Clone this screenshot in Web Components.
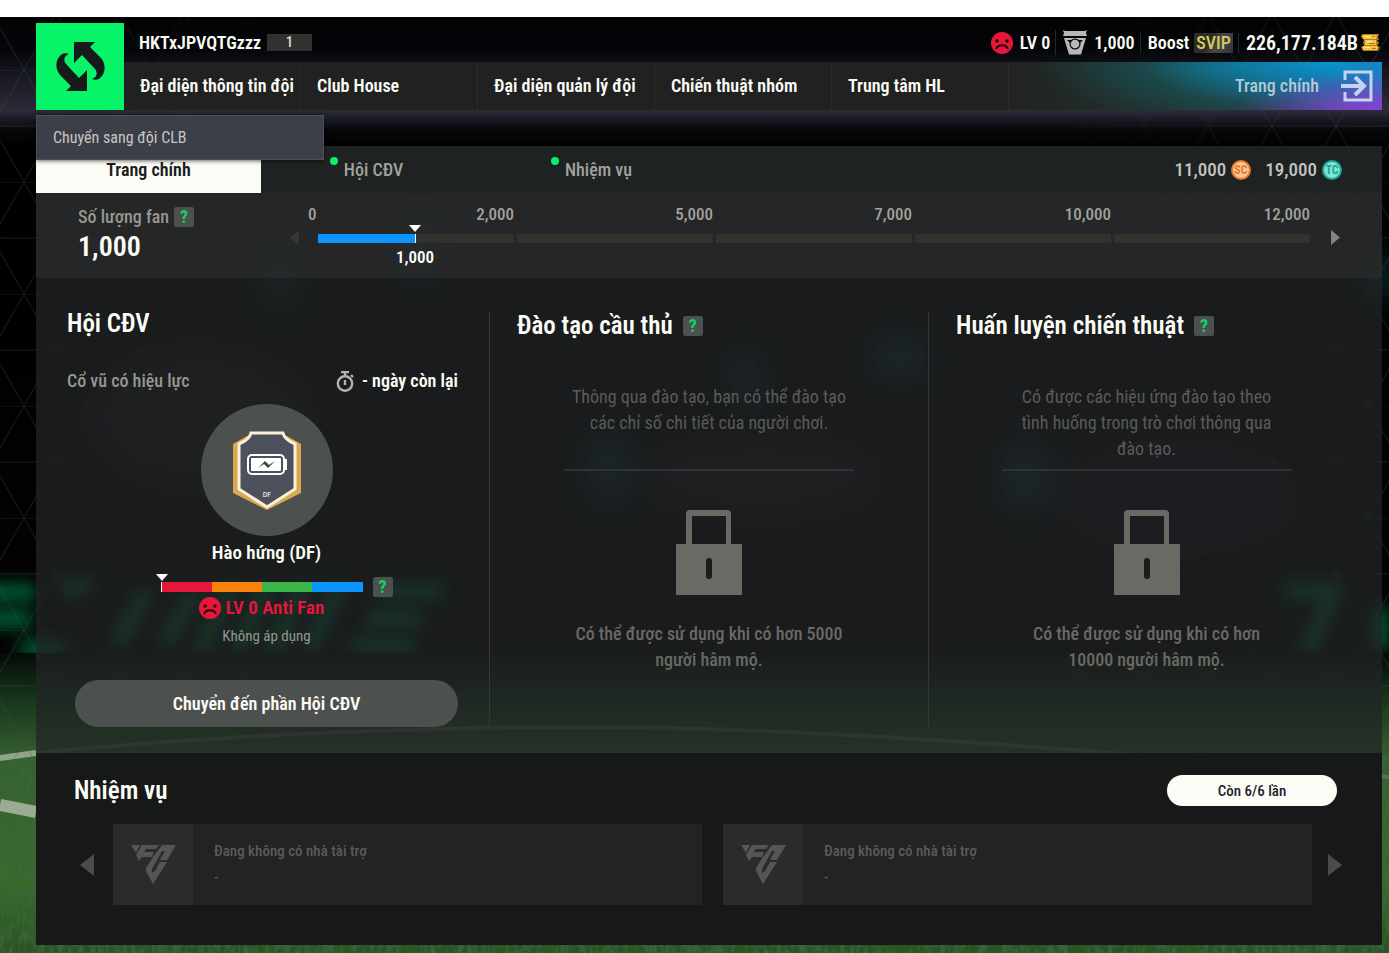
<!DOCTYPE html>
<html lang="vi">
<head>
<meta charset="utf-8">
<title>Club House</title>
<style>
    body {
        margin: 0;
        padding-top: 17px;
        background: #fff;
        color: #fbfcf5;
        font-family: "Roboto Condensed", "Noto Sans", sans-serif;
        font-size: 18px;
        font-weight: 600;
        line-height: 26px;
    }
</style>
</head>
<body>
<club-page>
    <club-header slot="header" user="HKTxJPVQTGzzz" level="1">
        <a slot="nav" href="#team">Đại diện thông tin đội</a>
        <a slot="nav" href="#club">Club House</a>
        <a slot="nav" href="#manager">Đại diện quản lý đội</a>
        <a slot="nav" href="#tactics">Chiến thuật nhóm</a>
        <a slot="nav" href="#hl">Trung tâm HL</a>
        <span slot="exit">Trang chính</span>
        <span slot="menu">Chuyển sang đội CLB</span>
    </club-header>

    <club-tabs slot="tabs">
        <club-tab active>Trang chính</club-tab>
        <club-tab dot>Hội CĐV</club-tab>
        <club-tab dot>Nhiệm vụ</club-tab>
        <club-coin slot="coins" kind="SC">11,000</club-coin>
        <club-coin slot="coins" kind="TC">19,000</club-coin>
    </club-tabs>

    <fan-progress slot="fans" value="1000" stops="0,2000,5000,7000,10000,12000">Số lượng fan</fan-progress>

    <fan-club slot="columns">Hội CĐV</fan-club>
    <locked-panel slot="columns">
        Đào tạo cầu thủ
        <span slot="info">Thông qua đào tạo, bạn có thể đào tạo các chỉ số chi tiết của người chơi.</span>
        <span slot="need">Có thể được sử dụng khi có hơn 5000 người hâm mộ.</span>
    </locked-panel>
    <locked-panel slot="columns" narrow>
        Huấn luyện chiến thuật
        <span slot="info">Có được các hiệu ứng đào tạo theo tình huống trong trò chơi thông qua đào tạo.</span>
        <span slot="need">Có thể được sử dụng khi có hơn 10000 người hâm mộ.</span>
    </locked-panel>

    <mission-list slot="missions">
        <span slot="title">Nhiệm vụ</span>
        <span slot="left">Còn 6/6 lần</span>
        <mission-card>Đang không có nhà tài trợ</mission-card>
        <mission-card>Đang không có nhà tài trợ</mission-card>
    </mission-list>
</club-page>

<script>
const resetStyle = `
    <style>
        * { box-sizing: border-box; }
        h1, h2, p { margin: 0; font: inherit; }
        button {
            padding: 0;
            border: 0;
            background: none;
            color: inherit;
            font: inherit;
            cursor: pointer;
        }
        a { color: inherit; text-decoration: none; }
        svg { display: block; }
        :host([hidden]) { display: none; }
    </style>
`

// every component renders once, into an open shadow root
class ClubElement extends HTMLElement {
    constructor() {
        super()
        this.attachShadow({ mode: 'open' })
    }
    connectedCallback() {
        this.shadowRoot.innerHTML = resetStyle + this.render()
    }
    render() {
        return '<slot></slot>'
    }
}

const SWAP_ARROW = 'M18 0h21l-5 5 11 11c5 6 5 15-1 20-2 2-5 2-8 1 5-2 6-6 3-10L26 13l-8 8z'

const ICONS = {
    swap: [49, 49, `
        <path fill="#161a18" d="${SWAP_ARROW}"/>
        <path fill="#161a18" d="${SWAP_ARROW}" transform="rotate(180 24.500 24.500)"/>`],
    sad: [22, 22, `
        <circle cx="11" cy="11" r="11" fill="#e6173a"/>
        <circle cx="6" cy="9" r="1.700" fill="#1c0509"/>
        <circle cx="16" cy="9" r="1.700" fill="#1c0509"/>
        <path d="M5 17c2-5 10-5 12 0" fill="none" stroke="#1c0509" stroke-width="1.800"/>`],
    medal: [24, 25, `
        <path fill="#b9b7b8" d="M0 0l2 1h20l2-1-1 3 1 3H0l1-3z"/>
        <path fill="#b9b7b8" d="M1 8h22l-5 16.500H6z"/>
        <path fill="#0b0c0f" d="M4 10h16l-3 3H7z"/>
        <circle cx="12" cy="14" r="5.500" fill="#0b0c0f"/>
        <circle cx="12" cy="14" r="4.300" fill="#b9b7b8"/>`],
    coins: [19, 17, `
        <path fill="#b27a1a" d="M1 0h17l-1 3 1 3h-2l2 3-2 3 3 1-2 4H2l-2-4 3-1-1-4 1-2-3-3z"/>
        <path fill="#f0c548" d="M2 1h14l-1 4H3L1 3zM4 6h11v5H4zM2 12h15l-1 4H3l-2-2z"/>
        <path fill="#fff1a0" d="M4 2h5v1H4zM6 7h5v1H6zM4 13h5v1H4z"/>
        <path fill="#b27a1a" d="M11 2h3v1h-3zM8 9h6v1H8zM11 14h4v1h-4z"/>`],
    exit: [32, 32, `
        <path d="M4 10V2h26v28H4v-8" fill="none" stroke="#c6d2ef" stroke-width="3"/>
        <path d="M0 16h23M14 7l9 9-9 9" fill="none" stroke="#c6d2ef" stroke-width="4"/>`],
    timer: [18, 21, `
        <circle cx="9" cy="12.500" r="7.200" fill="none" stroke="#b4b3b0" stroke-width="2.400"/>
        <path d="M5 1h8M9 1v4M15 4l2 2M9 9v5" fill="none" stroke="#b4b3b0" stroke-width="2.400"/>`],
    lock: [66, 85, `
        <path fill="#696a63" fill-rule="evenodd" d="M10 34V4q0-4 4-4h37q4 0 4 4v30h11v51H0V34zM16 34h34V6H16z"/>
        <rect x="30" y="48" width="6" height="21" rx="3" fill="#1a1b1c"/>`],
    badge: [68, 79, `
        <path fill="#d9a94f" d="M0 13L14 5h40l14 8v49L34 79 0 62z"/>
        <path fill="#4d515b" stroke="#fbf0dc" stroke-width="3" d="M18 2h32c1 5 5 8 12 11v45L34 76 6 58V13c7-3 11-6 12-11z"/>
        <rect x="15" y="24" width="36" height="19" rx="4" fill="none" stroke="#fff" stroke-width="2"/>
        <rect x="18" y="27" width="30" height="13" rx="1" fill="#fff"/>
        <path fill="#fff" d="M52 28h2v11h-2z"/>
        <path fill="#3c4048" d="M25 37l7-7 4 4 6-4-7 7-4-4z"/>
        <text x="34" y="66" fill="#fff" font-size="8" font-weight="400" text-anchor="middle">DF</text>`],
    fc: [45, 40, `
        <path fill="#535556" d="M0 0h9L5 8z"/>
        <path fill="#535556" d="M11 0h17l-3 4H15l-2 3h10l-2 5H11l-3 4-3-6z"/>
        <path fill="#535556" d="M31 0h14l-9 15h-7l5-9h-3L21 24v4l3-2 5-9h7L22 39l-7-13v-3l7-11z"/>`],
    left: [14, 22, '<path fill="currentColor" d="M14 0v22L0 11z"/>'],
    right: [14, 22, '<path fill="currentColor" d="M0 0v22l14-11z"/>'],
    marker: [12, 7, '<path fill="#fff" d="M0 0h12L6 7z"/>']
}

class ClubIcon extends ClubElement {
    render() {
        const [w, h, body] = ICONS[this.getAttribute('name')]
        return `
            <style>
                :host { display: inline-block; flex: none; }
            </style>
            <svg width="${w}" height="${h}" viewBox="0 0 ${w} ${h}" aria-hidden="true">${body}</svg>
        `
    }
}

// stadium behind the panels
class StadiumScene extends ClubElement {
    render() {
        return `
            <style>
                :host { display: block; overflow: hidden; background: #030405; }
                svg { width: 100%; height: 100%; }
            </style>
            <svg viewBox="0 0 1389 936" preserveAspectRatio="xMidYMid slice" aria-hidden="true">
                <defs>
                    <linearGradient id="sky" x2="0" y2="1">
                        <stop offset="0" stop-color="#020304"/>
                        <stop offset=".035" stop-color="#050609"/>
                        <stop offset=".06" stop-color="#15161f"/>
                        <stop offset=".1" stop-color="#2b2c38"/>
                        <stop offset=".12" stop-color="#08080b"/>
                        <stop offset=".14" stop-color="#000"/>
                        <stop offset="1" stop-color="#050405"/>
                    </linearGradient>
                    <linearGradient id="grass" x2="0" y2="1">
                        <stop offset="0" stop-color="#050a08"/>
                        <stop offset=".15" stop-color="#17351a"/>
                        <stop offset=".35" stop-color="#35602f"/>
                        <stop offset=".75" stop-color="#3a6c2b"/>
                        <stop offset="1" stop-color="#2a5222"/>
                    </linearGradient>
                    <linearGradient id="edge">
                        <stop offset="0" stop-color="#fff"/>
                        <stop offset=".2" stop-color="#000"/>
                        <stop offset=".75" stop-color="#000"/>
                        <stop offset="1" stop-color="#fff"/>
                    </linearGradient>
                    <pattern id="mesh" width="64" height="112" patternUnits="userSpaceOnUse" patternTransform="translate(24 -59)">
                        <path d="M0 0h64M0 56h64M0 0l64 112M64 0L0 112" fill="none" stroke="#46504c" stroke-opacity=".4"/>
                    </pattern>
                    <mask id="fade"><rect width="1389" height="936" fill="url(#edge)"/></mask>
                    <filter id="soft" x="-20%" y="-20%" width="140%" height="140%"><feGaussianBlur stdDeviation="16"/></filter>
                    <filter id="glow" x="-20%" y="-50%" width="140%" height="200%"><feGaussianBlur stdDeviation="8"/></filter>
                    <filter id="blades" x="0" y="0" width="100%" height="100%">
                        <feTurbulence type="fractalNoise" baseFrequency=".22 .08" numOctaves="3" seed="4"/>
                        <feColorMatrix values="0 0 0 0 .04  0 0 0 0 .13  0 0 0 0 .04  3 0 0 0 -1.200"/>
                    </filter>
                </defs>
                <rect width="1389" height="936" fill="url(#sky)"/>
                <g filter="url(#soft)" opacity=".75">
                    <ellipse cx="420" cy="230" rx="18" ry="40" fill="#0d4048"/>
                    <ellipse cx="280" cy="260" rx="20" ry="34" fill="#0d3030"/>
                    <ellipse cx="608" cy="450" rx="20" ry="36" fill="#0d4044"/>
                    <ellipse cx="745" cy="360" rx="16" ry="30" fill="#0d4044"/>
                    <ellipse cx="900" cy="340" rx="30" ry="22" fill="#0d4044"/>
                    <ellipse cx="1025" cy="460" rx="24" ry="34" fill="#0d4044"/>
                    <ellipse cx="1382" cy="260" rx="18" ry="24" fill="#0d3c40"/>
                    <ellipse cx="200" cy="400" rx="110" ry="70" fill="#14141f"/>
                    <ellipse cx="760" cy="460" rx="120" ry="40" fill="#14121e"/>
                    <ellipse cx="1180" cy="480" rx="120" ry="60" fill="#12111c"/>
                </g>
                <!-- advertising boards glowing along the touchline -->
                <g filter="url(#glow)" fill="none" stroke="#04683a" stroke-width="15">
                    <path d="M-30 575h66M-30 602h62M20 632h46M60 570h32"/>
                    <path d="M148 574l-32 54M196 574l-32 54M232 568l-32 68M268 568l-32 68M304 568l-32 68M340 568l-32 68"/>
                    <path d="M378 574h64M366 602h56M350 630h66"/>
                    <path d="M1286 574h56M1334 574l-28 62M1380 590v44"/>
                </g>
                <rect y="636" width="1389" height="300" fill="url(#grass)"/>
                <rect y="740" width="1389" height="196" filter="url(#blades)"/>
                <path d="M0 741l36-5" fill="none" stroke="#b9c1b2" stroke-width="6" stroke-opacity=".7"/>
                <path d="M36 736Q280 712 560 710T1389 760" fill="none" stroke="#8d8f90" stroke-width="4" stroke-opacity=".4"/>
                <path d="M0 788l36 7" fill="none" stroke="#c3cbbd" stroke-width="12" stroke-opacity=".7"/>
                <rect width="1389" height="936" fill="url(#mesh)" mask="url(#fade)"/>
            </svg>
        `
    }
}

class HelpTip extends ClubElement {
    render() {
        return `
            <style>
                :host { display: inline-flex; flex: none; }
                button {
                    width: 20px;
                    height: 20px;
                    border-radius: 2px;
                    background: #4c504f;
                    color: #10d561;
                    font-size: 18px;
                    font-weight: 700;
                    line-height: 20px;
                }
            </style>
            <button type="button" aria-label="Trợ giúp">?</button>
        `
    }
}

class ClubPage extends ClubElement {
    render() {
        return `
            <style>
                :host { display: grid; }
                stadium-scene, main { grid-area: 1 / 1; min-width: 0; }
                stadium-scene { contain: size; }
                main { position: relative; padding: 6px 7px 8px 36px; }
                .panel { margin-top: 36px; background: rgba(34, 36, 38, .75); }
                .top { background: rgba(45, 47, 46, .6); }
                .columns {
                    display: grid;
                    grid-template-columns: 454fr 439fr 453fr;
                    padding: 34px 0 26px;
                }
            </style>
            <stadium-scene></stadium-scene>
            <main>
                <slot name="header"></slot>
                <div class="panel">
                    <div class="top">
                        <slot name="tabs"></slot>
                        <slot name="fans"></slot>
                    </div>
                    <div class="columns"><slot name="columns"></slot></div>
                    <slot name="missions"></slot>
                </div>
            </main>
        `
    }
}

class ClubHeader extends ClubElement {
    render() {
        return `
            <style>
                :host {
                    position: relative;
                    z-index: 1;
                    display: grid;
                    grid-template: 39px 48px / 88px 1fr;
                }
                .logo {
                    grid-row: 1 / 3;
                    display: grid;
                    place-items: center;
                    background: #07f468;
                }
                .status { display: flex; align-items: center; padding: 0 2px 0 15px; }
                .level {
                    width: 45px;
                    height: 17px;
                    margin: 0 auto 0 6px;
                    background: #32312f;
                    color: #d6d6d0;
                    font-size: 15px;
                    font-weight: 500;
                    line-height: 17px;
                    text-align: center;
                }
                .stat { display: flex; align-items: center; gap: 7px; }
                .stat + .stat { margin-left: 5px; padding-left: 7px; border-left: 1px solid #26272a; line-height: 20px; }
                .boost { gap: 5px; }
                .money { font-size: 20px; gap: 3px; }
                .svip {
                    padding: 0 2px;
                    background: linear-gradient(120deg, #2d2c27 40%, #48474a 60%, #2f3440);
                    color: #d3cc5f;
                    font-weight: 500;
                }
                nav { display: flex; background: #212121; }
                ::slotted(a) {
                    box-sizing: border-box;
                    width: 177px;
                    flex: none;
                    padding-left: 16px;
                    border-right: 1px solid #2b2b2b;
                    color: inherit;
                    line-height: 48px;
                    text-decoration: none;
                    white-space: nowrap;
                }
                .exit {
                    flex: 1;
                    display: flex;
                    align-items: center;
                    justify-content: flex-end;
                    gap: 22px;
                    padding-right: 9px;
                    background:
                        radial-gradient(ellipse 40% 90% at 100% 110%, #8a3fd0, transparent),
                        radial-gradient(ellipse 50% 100% at 86% 0, #0a93d2, transparent),
                        radial-gradient(ellipse 55% 130% at 62% 0, #155f68, transparent),
                        linear-gradient(90deg, #212321, #22302c 40%, #25404a 75%, #4a62c4);
                    color: #b5c9d8;
                    font-weight: 500;
                }
                .menu {
                    position: absolute;
                    top: 92px;
                    left: 0;
                    width: 288px;
                    height: 45px;
                    padding-left: 16px;
                    border: 1px solid #46525c;
                    background: #3c3e48;
                    color: #c6c6c6;
                    font-size: 16px;
                    font-weight: 400;
                    text-align: left;
                    box-shadow: 0 1px 4px rgba(0, 0, 0, .6);
                }
            </style>
            <button class="logo" type="button" aria-label="Chuyển đội"><club-icon name="swap"></club-icon></button>
            <div class="status">
                <span>${this.getAttribute('user')}</span>
                <span class="level">${this.getAttribute('level')}</span>
                <span class="stat"><club-icon name="sad"></club-icon>LV 0</span>
                <span class="stat"><club-icon name="medal"></club-icon>1,000</span>
                <span class="stat boost">Boost <span class="svip">SVIP</span></span>
                <span class="stat money">226,177.184B<club-icon name="coins"></club-icon></span>
            </div>
            <nav>
                <slot name="nav"></slot>
                <a class="exit" href="#main"><slot name="exit"></slot><club-icon name="exit"></club-icon></a>
            </nav>
            <button class="menu" type="button"><slot name="menu"></slot></button>
        `
    }
}

class ClubTabs extends ClubElement {
    render() {
        return `
            <style>
                :host { display: flex; height: 47px; background: rgba(27, 31, 31, .6); }
                .coins { display: flex; align-items: center; gap: 14px; margin-left: auto; padding-right: 40px; }
            </style>
            <slot></slot>
            <div class="coins"><slot name="coins"></slot></div>
        `
    }
}

class ClubTab extends ClubElement {
    render() {
        return `
            <style>
                :host { display: block; width: 225px; color: #a1a29c; font-weight: 500; }
                :host([active]) { background: #fbfcf6; color: #1a1c1c; font-weight: 600; }
                button { width: 100%; height: 100%; }
                .label { position: relative; }
                :host([dot]) .label::before {
                    content: "";
                    position: absolute;
                    top: -2px;
                    left: -14px;
                    width: 8px;
                    height: 8px;
                    border-radius: 50%;
                    background: #07f468;
                }
            </style>
            <button type="button"><span class="label"><slot></slot></span></button>
        `
    }
}

class ClubCoin extends ClubElement {
    render() {
        const kind = this.getAttribute('kind')
        const [rim, face] = kind === 'SC' ? ['#e8782a', '#f9c795'] : ['#1aa697', '#7fe3d5']
        return `
            <style>
                :host { display: flex; align-items: center; gap: 5px; color: #c3c4c0; font-size: 19px; font-weight: 500; }
            </style>
            <slot></slot>
            <svg width="20" height="20" viewBox="0 0 20 20">
                <circle cx="10" cy="10" r="9" fill="${face}" stroke="${rim}" stroke-width="2"/>
                <text x="10" y="14" fill="${rim}" font-size="12" font-weight="700" text-anchor="middle">${kind}</text>
            </svg>
        `
    }
}

class FanProgress extends ClubElement {
    render() {
        const value = Number(this.getAttribute('value'))
        const [first, ...stops] = this.getAttribute('stops').split(',').map(Number)
        const fill = value / stops[0] * 100
        const segments = stops.map((stop, i) => `
            <div class="segment">
                <span class="stop">${stop.toLocaleString('en-US')}</span>
                <div class="bar">${i === 0 ? `
                    <div class="fill" style="width: ${fill}%">
                        <club-icon name="marker"></club-icon>
                        <span class="value">${value.toLocaleString('en-US')}</span>
                    </div>` : ''}
                </div>
            </div>`).join('')
        return `
            <style>
                :host { display: flex; height: 85px; }
                .count { width: 254px; padding: 11px 0 0 42px; color: #96978f; font-weight: 500; }
                .count p { display: flex; align-items: center; gap: 5px; }
                .count strong { display: block; color: #fbfcf5; font-size: 28px; font-weight: 600; line-height: 34px; }
                .arrow { width: 9px; height: 15px; margin-top: 37px; color: #353736; }
                .next { color: #83857f; }
                .meter { position: relative; flex: 1; display: flex; gap: 3px; margin: 0 21px 0 19px; }
                .first { position: absolute; top: 10px; left: -10px; }
                .segment { flex: 1; padding-top: 10px; text-align: right; }
                .first, .stop { display: block; color: #a1a29c; font-size: 17px; font-weight: 500; line-height: 22px; }
                .bar { height: 9px; margin-top: 9px; background: #32312e; }
                .fill { position: relative; height: 9px; border-right: 1px solid #fff; background: #0d95ff; }
                club-icon { position: absolute; top: -9px; right: -6px; }
                .value {
                    position: absolute;
                    top: 12px;
                    right: 0;
                    transform: translateX(50%);
                    font-size: 17px;
                    line-height: 22px;
                }
                .next { margin-right: 42px; }
            </style>
            <div class="count">
                <p><slot></slot><help-tip></help-tip></p>
                <strong>${value.toLocaleString('en-US')}</strong>
            </div>
            <button class="arrow" type="button" aria-label="Trước"><svg width="9" height="15" viewBox="0 0 9 15"><path fill="currentColor" d="M9 0v15L0 7.500z"/></svg></button>
            <div class="meter" role="meter" aria-label="Số lượng fan" aria-valuenow="${value}" aria-valuemax="${stops.at(-1)}">
                <span class="first">${first}</span>
                ${segments}
            </div>
            <button class="arrow next" type="button" aria-label="Sau"><svg width="9" height="15" viewBox="0 0 9 15"><path fill="currentColor" d="M0 0v15l9-7.500z"/></svg></button>
        `
    }
}

class FanClub extends ClubElement {
    render() {
        return `
            <style>
                :host {
                    display: flex;
                    flex-direction: column;
                    align-items: center;
                    padding: 0 31px 0 39px;
                    border-right: 1px solid #35373a;
                }
                header { align-self: stretch; margin-left: -8px; }
                h2 { font-size: 25px; line-height: 24px; }
                .row { display: flex; justify-content: space-between; margin-top: 32px; color: #96978f; font-weight: 500; }
                .timer { display: flex; align-items: center; gap: 8px; color: #fbfcf5; font-weight: 600; }
                .round {
                    display: grid;
                    place-items: center;
                    width: 132px;
                    height: 132px;
                    margin: 10px 0 4px;
                    border-radius: 50%;
                    background: #4c504f;
                }
                .name, .level { font-size: 19px; }
                .mood { display: flex; align-items: center; gap: 10px; height: 20px; margin: 11px 0 0 20px; }
                .scale { position: relative; display: flex; width: 202px; height: 10px; border-left: 1px solid #fff; }
                .scale i { flex: 1; }
                .scale club-icon { position: absolute; top: -8px; left: -6px; }
                .level { display: flex; align-items: center; gap: 5px; padding-right: 10px; color: #e6173a; line-height: 22px; }
                small { margin-top: 7px; color: #96978f; font-size: 15px; font-weight: 400; line-height: 20px; }
                .go {
                    align-self: stretch;
                    height: 47px;
                    margin-top: 34px;
                    border-radius: 24px;
                    background: #4c504f;
                }
            </style>
            <header>
                <h2><slot></slot></h2>
                <div class="row">
                    <span>Cổ vũ có hiệu lực</span>
                    <span class="timer"><club-icon name="timer"></club-icon>- ngày còn lại</span>
                </div>
            </header>
            <div class="round"><club-icon name="badge"></club-icon></div>
            <p class="name">Hào hứng (DF)</p>
            <div class="mood">
                <div class="scale">
                    <i style="background: #e6173a"></i>
                    <i style="background: #fa820c"></i>
                    <i style="background: #3ab54a"></i>
                    <i style="background: #0d95ff"></i>
                    <club-icon name="marker"></club-icon>
                </div>
                <help-tip></help-tip>
            </div>
            <p class="level"><club-icon name="sad"></club-icon>LV 0 Anti Fan</p>
            <small>Không áp dụng</small>
            <button class="go" type="button">Chuyển đến phần Hội CĐV</button>
        `
    }
}

// feature that opens once there are enough fans
class LockedPanel extends ClubElement {
    render() {
        return `
            <style>
                :host { display: block; padding: 0 0 0 27px; border-right: 1px solid #35373a; }
                :host([narrow]) { padding-right: 18px; border: 0; }
                h2 { display: flex; align-items: center; gap: 10px; font-size: 25px; line-height: 28px; }
                .body {
                    display: flex;
                    flex-direction: column;
                    align-items: center;
                    margin-left: -27px;
                    color: #696a63;
                    text-align: center;
                }
                .info {
                    width: 290px;
                    min-height: 87px;
                    margin-top: 44px;
                    border-bottom: 2px solid #2f3134;
                    color: #5a5b59;
                    font-weight: 400;
                }
                :host([narrow]) .info, :host([narrow]) .need { padding: 0 14px; }
                club-icon { margin: 39px 0 26px; }
                .need { width: 290px; font-weight: 500; }
            </style>
            <h2><slot></slot><help-tip></help-tip></h2>
            <div class="body">
                <p class="info"><slot name="info"></slot></p>
                <club-icon name="lock"></club-icon>
                <p class="need"><slot name="need"></slot></p>
            </div>
        `
    }
}

class MissionList extends ClubElement {
    render() {
        return `
            <style>
                :host { display: block; padding: 22px 40px 40px 38px; background: rgba(23, 24, 24, .96); }
                header { display: flex; align-items: center; justify-content: space-between; padding-right: 5px; }
                h2 { font-size: 25px; line-height: 31px; }
                .left {
                    width: 170px;
                    height: 31px;
                    border-radius: 16px;
                    background: #fbfcf6;
                    color: #1f2228;
                    font-size: 15px;
                    font-weight: 500;
                }
                .row { display: flex; align-items: center; margin: 18px 0 0 6px; color: #4a4b4b; }
                .row button { display: flex; }
                .cards { flex: 1; display: flex; gap: 21px; margin: 0 16px 0 19px; }
            </style>
            <header>
                <h2><slot name="title"></slot></h2>
                <button class="left" type="button"><slot name="left"></slot></button>
            </header>
            <div class="row">
                <button type="button" aria-label="Trước"><club-icon name="left"></club-icon></button>
                <div class="cards"><slot></slot></div>
                <button type="button" aria-label="Sau"><club-icon name="right"></club-icon></button>
            </div>
        `
    }
}

class MissionCard extends ClubElement {
    render() {
        return `
            <style>
                :host { flex: 1; display: flex; height: 81px; background: #222323; }
                .thumb { display: grid; place-items: center; width: 80px; background: #2a2c2c; }
                .text { padding: 14px 21px; color: #5b5c58; font-size: 15px; font-weight: 500; }
            </style>
            <div class="thumb"><club-icon name="fc"></club-icon></div>
            <div class="text"><p><slot></slot></p><p>-</p></div>
        `
    }
}

customElements.define('club-icon', ClubIcon)
customElements.define('stadium-scene', StadiumScene)
customElements.define('help-tip', HelpTip)
customElements.define('club-page', ClubPage)
customElements.define('club-header', ClubHeader)
customElements.define('club-tabs', ClubTabs)
customElements.define('club-tab', ClubTab)
customElements.define('club-coin', ClubCoin)
customElements.define('fan-progress', FanProgress)
customElements.define('fan-club', FanClub)
customElements.define('locked-panel', LockedPanel)
customElements.define('mission-list', MissionList)
customElements.define('mission-card', MissionCard)
</script>
</body>
</html>
